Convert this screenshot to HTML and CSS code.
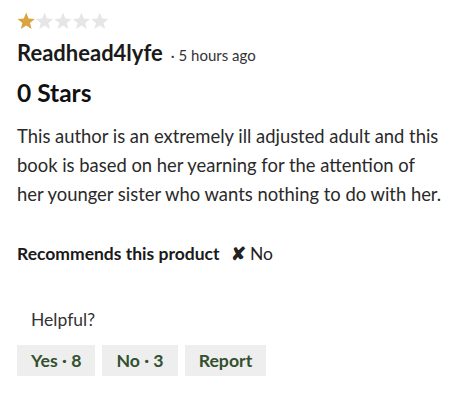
FILE: index.html
```html
<!DOCTYPE html>
<html>
<head>
<meta charset="utf-8">
<link rel="stylesheet" href="styles.css">
</head>
<body>
<div class="review">
  <div class="stars">
    <svg width="92" height="18" viewBox="0 0 92 18">
      <defs>
        <path id="st" d="M9.2 0.6 L11.6 6.5 L17.8 6.9 L13 10.9 L14.6 17 L9.2 13.6 L3.8 17 L5.4 10.9 L0.6 6.9 L6.8 6.5 Z"/>
      </defs>
      <use href="#st" x="0" fill="#d9a540"/>
      <use href="#st" x="18.4" fill="#e6e6e6"/>
      <use href="#st" x="36.8" fill="#e6e6e6"/>
      <use href="#st" x="55.2" fill="#e6e6e6"/>
      <use href="#st" x="73.6" fill="#e6e6e6"/>
    </svg>
  </div>
  <div class="author"><span class="name">Readhead4lyfe</span><span class="time">· 5 hours ago</span></div>
  <h2 class="title">0 Stars</h2>
  <p class="body">This author is an extremely ill adjusted adult and this<br>book is based on her yearning for the attention of<br>her younger sister who wants nothing to do with her.</p>
  <div class="recommend"><span class="rlabel">Recommends this product</span><span class="rval"><span class="x">✘</span> No</span></div>
  <div class="helpful">Helpful?</div>
  <div class="buttons">
    <button class="btn">Yes · 8</button>
    <button class="btn">No · 3</button>
    <button class="btn">Report</button>
  </div>
</div>
</body>
</html>
```

FILE: styles.css
```css
html, body {
  margin: 0;
  padding: 0;
  background: #ffffff;
}
body {
  font-family: Lato, "Noto Sans", sans-serif;
  color: #222222;
}
.review {
  padding: 12px 17px 0 17px;
}
.stars {
  height: 18px;
  line-height: 0;
}
.author {
  margin-top: 10px;
  display: flex;
  align-items: baseline;
  line-height: 26px;
}
.name {
  font-weight: 700;
  font-size: 22px;
  color: #1a1a1a;
}
.time {
  font-size: 15px;
  color: #333;
  margin-left: 8px;
}
.title {
  margin: 10px 0 0 0;
  font-size: 24.5px;
  font-weight: 700;
  color: #111;
  line-height: 30px;
}
.body {
  margin: 14px 0 0 0;
  font-size: 18.4px;
  line-height: 29px;
  color: #2a2a2a;
}
.recommend {
  margin-top: 33px;
  font-size: 17.5px;
  line-height: 24px;
  display: flex;
  align-items: baseline;
}
.rlabel {
  font-weight: 700;
  color: #1a1a1a;
}
.rval {
  margin-left: 11px;
  color: #222;
}
.x {
  font-weight: 700;
}
.helpful {
  margin-top: 42px;
  margin-left: 14px;
  font-size: 17.5px;
  line-height: 24px;
  color: #333;
}
.buttons {
  margin-top: 13px;
  display: flex;
  gap: 7px;
}
.btn {
  border: none;
  background: #eeeeee;
  font-family: Lato, "Noto Sans", sans-serif;
  font-size: 17.7px;
  font-weight: 700;
  color: #33502f;
  height: 31px;
  padding: 0 14px;
}
```
